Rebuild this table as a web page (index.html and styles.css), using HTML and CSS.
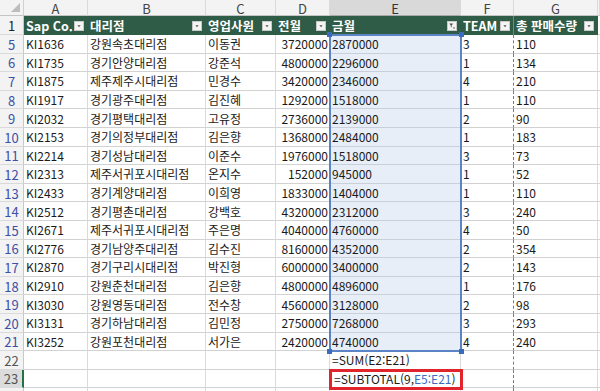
FILE: index.html
```html
<!DOCTYPE html>
<html lang="ko">
<head>
<meta charset="utf-8">
<link rel="stylesheet" href="styles.css">
</head>
<body>
<div class="sheet">
  <div class="row colhdr">
    <div class="corner"><span class="tri"></span></div>
    <div class="ch">A</div><div class="ch">B</div><div class="ch">C</div><div class="ch">D</div><div class="ch sel">E</div><div class="ch">F</div><div class="ch">G</div><div class="ch"></div>
  </div>
  <div class="row thead">
    <div class="rh dark">1</div>
    <div class="th"><span>Sap Co.</span><span class="fb"><svg viewBox="0 0 10 10"><path d="M3 4h4l-2 2.5z"/></svg></span></div>
    <div class="th"><span>대리점</span><span class="fb"><svg viewBox="0 0 10 10"><path d="M3 4h4l-2 2.5z"/></svg></span></div>
    <div class="th"><span>영업사원</span><span class="fb"><svg viewBox="0 0 10 10"><path d="M3 4h4l-2 2.5z"/></svg></span></div>
    <div class="th"><span>전월</span><span class="fb"><svg viewBox="0 0 10 10"><path d="M3 4h4l-2 2.5z"/></svg></span></div>
    <div class="th"><span>금월</span><span class="fb"><svg viewBox="0 0 10 10"><path d="M1.5 2h5l-2 2.3v2.7l-1-0.6v-2.1z"/><path d="M6 7h3l-1.5 1.6z"/></svg></span></div>
    <div class="th pb"><span>TEAM</span><span class="fb"><svg viewBox="0 0 10 10"><path d="M3 4h4l-2 2.5z"/></svg></span></div>
    <div class="th"><span>총 판매수량</span><span class="fb"><svg viewBox="0 0 10 10"><path d="M3 4h4l-2 2.5z"/></svg></span></div>
    <div class="th blank"></div>
  </div>

  <div class="row"><div class="rh">5</div><div class="c">KI1636</div><div class="c">강원속초대리점</div><div class="c">이동권</div><div class="c num">3720000</div><div class="c e">2870000</div><div class="c pb">3</div><div class="c">110</div><div class="c"></div></div>
  <div class="row"><div class="rh">6</div><div class="c">KI1735</div><div class="c">경기안양대리점</div><div class="c">강준석</div><div class="c num">4800000</div><div class="c e">2296000</div><div class="c pb">1</div><div class="c">134</div><div class="c"></div></div>
  <div class="row"><div class="rh">7</div><div class="c">KI1875</div><div class="c">제주제주시대리점</div><div class="c">민경수</div><div class="c num">3420000</div><div class="c e">2346000</div><div class="c pb">4</div><div class="c">210</div><div class="c"></div></div>
  <div class="row"><div class="rh">8</div><div class="c">KI1917</div><div class="c">경기광주대리점</div><div class="c">김진혜</div><div class="c num">1292000</div><div class="c e">1518000</div><div class="c pb">1</div><div class="c">110</div><div class="c"></div></div>
  <div class="row"><div class="rh">9</div><div class="c">KI2032</div><div class="c">경기평택대리점</div><div class="c">고유정</div><div class="c num">2736000</div><div class="c e">2139000</div><div class="c pb">2</div><div class="c">90</div><div class="c"></div></div>
  <div class="row"><div class="rh">10</div><div class="c">KI2153</div><div class="c">경기의정부대리점</div><div class="c">김은향</div><div class="c num">1368000</div><div class="c e">2484000</div><div class="c pb">1</div><div class="c">183</div><div class="c"></div></div>
  <div class="row"><div class="rh">11</div><div class="c">KI2214</div><div class="c">경기성남대리점</div><div class="c">이준수</div><div class="c num">1976000</div><div class="c e">1518000</div><div class="c pb">3</div><div class="c">73</div><div class="c"></div></div>
  <div class="row"><div class="rh">12</div><div class="c">KI2313</div><div class="c">제주서귀포시대리점</div><div class="c">온지수</div><div class="c num">152000</div><div class="c e">945000</div><div class="c pb">1</div><div class="c">52</div><div class="c"></div></div>
  <div class="row"><div class="rh">13</div><div class="c">KI2433</div><div class="c">경기계양대리점</div><div class="c">이희영</div><div class="c num">1833000</div><div class="c e">1404000</div><div class="c pb">1</div><div class="c">110</div><div class="c"></div></div>
  <div class="row"><div class="rh">14</div><div class="c">KI2512</div><div class="c">경기평촌대리점</div><div class="c">강백호</div><div class="c num">4320000</div><div class="c e">2312000</div><div class="c pb">3</div><div class="c">240</div><div class="c"></div></div>
  <div class="row"><div class="rh">15</div><div class="c">KI2671</div><div class="c">제주서귀포시대리점</div><div class="c">주은명</div><div class="c num">4040000</div><div class="c e">4760000</div><div class="c pb">4</div><div class="c">50</div><div class="c"></div></div>
  <div class="row"><div class="rh">16</div><div class="c">KI2776</div><div class="c">경기남양주대리점</div><div class="c">김수진</div><div class="c num">8160000</div><div class="c e">4352000</div><div class="c pb">2</div><div class="c">354</div><div class="c"></div></div>
  <div class="row"><div class="rh">17</div><div class="c">KI2870</div><div class="c">경기구리시대리점</div><div class="c">박진형</div><div class="c num">6000000</div><div class="c e">3400000</div><div class="c pb">2</div><div class="c">143</div><div class="c"></div></div>
  <div class="row"><div class="rh">18</div><div class="c">KI2910</div><div class="c">강원춘천대리점</div><div class="c">김은향</div><div class="c num">4800000</div><div class="c e">4896000</div><div class="c pb">1</div><div class="c">176</div><div class="c"></div></div>
  <div class="row"><div class="rh">19</div><div class="c">KI3030</div><div class="c">강원영동대리점</div><div class="c">전수창</div><div class="c num">4560000</div><div class="c e">3128000</div><div class="c pb">2</div><div class="c">98</div><div class="c"></div></div>
  <div class="row"><div class="rh">20</div><div class="c">KI3131</div><div class="c">경기하남대리점</div><div class="c">김민정</div><div class="c num">2750000</div><div class="c e">7268000</div><div class="c pb">3</div><div class="c">293</div><div class="c"></div></div>
  <div class="row"><div class="rh">21</div><div class="c">KI3252</div><div class="c">강원포천대리점</div><div class="c">서가은</div><div class="c num">2420000</div><div class="c e">4740000</div><div class="c pb">4</div><div class="c">240</div><div class="c"></div></div>
  <div class="row"><div class="rh plain">22</div><div class="c"></div><div class="c"></div><div class="c"></div><div class="c"></div><div class="c">=SUM(E2:E21)</div><div class="c pb"></div><div class="c"></div><div class="c"></div></div>
  <div class="row"><div class="rh plain act">23</div><div class="c"></div><div class="c"></div><div class="c"></div><div class="c"></div><div class="c ind">=SUBTOTAL(9,<span class="ref">E5:E21</span>)</div><div class="c pb"></div><div class="c"></div><div class="c"></div></div>
  <div class="row"><div class="rh plain"></div><div class="c"></div><div class="c"></div><div class="c"></div><div class="c"></div><div class="c"></div><div class="c pb"></div><div class="c"></div><div class="c"></div></div>

  <div class="selbox"><i class="hd tl"></i><i class="hd tr"></i><i class="hd bl"></i><i class="hd br"></i></div>
  <div class="redbox"></div>
</div>
</body>
</html>
```

FILE: styles.css
```css
html, body {
  margin: 0;
  padding: 0;
  background: #ffffff;
}

.sheet {
  position: relative;
  width: 600px;
  height: 391px;
  overflow: hidden;
  font-family: "Noto Sans CJK KR", "Noto Sans", sans-serif;
  font-size: 12px;
  color: #1a1a1a;
}

.row {
  display: grid;
  grid-template-columns: 24px 64px 118px 70px 54px 131px 53px 84px 1fr;
  height: 18.6px;
}

.colhdr {
  height: 16px;
}

.thead {
  height: 19px;
}

.corner {
  position: relative;
  background: #f3f3f3;
  border-right: 1px solid #d0d0d0;
  border-bottom: 1px solid #c4c4c4;
}

.tri {
  position: absolute;
  right: 3px;
  bottom: 3px;
  width: 0;
  height: 0;
  border-left: 9px solid transparent;
  border-bottom: 9px solid #bdbdbd;
}

.ch {
  background: #f3f3f3;
  border-right: 1px solid #dadada;
  border-bottom: 1px solid #c4c4c4;
  color: #444;
  font-size: 13px;
  display: flex;
  align-items: center;
  justify-content: center;
  line-height: 1;
  padding-top: 1px;
}

.ch.sel {
  background: #d9d9d9;
  color: #333;
  border-bottom-color: #a8a8a8;
}

.rh {
  background: #f3f3f3;
  border-right: 1px solid #c8c8c8;
  border-bottom: 1px solid #dadada;
  display: flex;
  align-items: center;
  justify-content: center;
  color: #3e4fa6;
  font-size: 13px;
  line-height: 1;
  padding-top: 1px;
}

.rh.plain {
  color: #555;
}

.rh.dark {
  color: #222;
}

.rh.act {
  background: #dcdcdc;
  border-right: 2px solid #217346;
  color: #555;
}

.th {
  background: #2f5c47;
  color: #ffffff;
  font-weight: bold;
  font-size: 12.5px;
  display: flex;
  align-items: center;
  justify-content: space-between;
  padding: 0 3px 0 2px;
  border-right: 1px solid #2f5c47;
  white-space: nowrap;
  overflow: hidden;
}

.th.pb {
  border-right: 1px solid #6d8c7d;
}

.th.blank {
  background: #ffffff;
  border-right: none;
  border-bottom: 1px solid #dadada;
}

.fb {
  flex: none;
  width: 10px;
  height: 10px;
  box-sizing: border-box;
  background: #f4f4f4;
  border: 1px solid #c8c8c8;
  display: flex;
}

.fb svg {
  width: 8px;
  height: 8px;
  fill: #555;
}

.c {
  box-sizing: border-box;
  border-right: 1px solid #dadada;
  border-bottom: 1px solid #d2d2d2;
  padding: 1px 2px 0;
  display: flex;
  align-items: center;
  white-space: nowrap;
  overflow: hidden;
  line-height: 1;
}

.num {
  justify-content: flex-end;
  padding-right: 1px;
}

.e {
  background: #e7eef8;
  border-bottom-color: #c9d0da;
}

.pb {
  border-right: 1px dashed #7a7a7a;
}

.ind {
  padding-left: 4px;
}

.ref {
  color: #3a6cc0;
}

.selbox {
  position: absolute;
  left: 329px;
  top: 34px;
  width: 133px;
  height: 318px;
  box-sizing: border-box;
  border: 2px solid #5a84c6;
}

.hd {
  position: absolute;
  width: 5px;
  height: 5px;
  background: #3b6bbd;
}

.tl { left: -4px; top: -4px; }
.tr { right: -4px; top: -4px; }
.bl { left: -4px; bottom: -4px; }
.br { right: -4px; bottom: -4px; }

.redbox {
  position: absolute;
  left: 329px;
  top: 369px;
  width: 134px;
  height: 21px;
  box-sizing: border-box;
  border: 3px solid #e1252c;
}
```
